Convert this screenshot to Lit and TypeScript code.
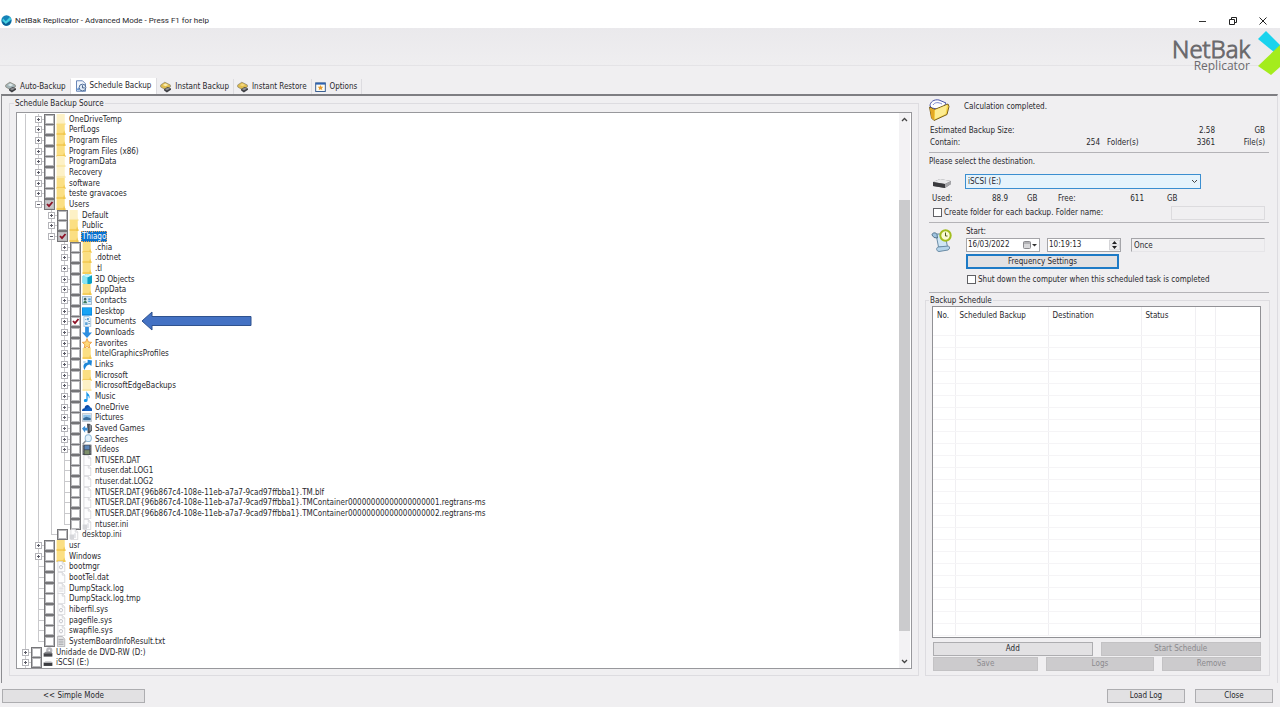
import { LitElement, html, css, svg, nothing } from "lit";
import { customElement, property, state } from "lit/decorators.js";
import { classMap } from "lit/directives/class-map.js";

type Check = "off" | "on" | "partial";

interface TreeEntry {
  name: string;
  level: number;
  icon: string;
  expand?: "plus" | "minus";
  check?: Check;
  last?: boolean;
  selected?: boolean;
  pointed?: boolean;
}

const dir = (level: number, name: string, icon = "folder", extra: Partial<TreeEntry> = {}): TreeEntry => ({
  name, level, icon, expand: "plus", ...extra,
});
const file = (level: number, name: string, icon = "file", extra: Partial<TreeEntry> = {}): TreeEntry => ({
  name, level, icon, ...extra,
});

const GUID = "NTUSER.DAT{96b867c4-108e-11eb-a7a7-9cad97ffbba1}";

const ENTRIES: TreeEntry[] = [
  dir(1, "OneDriveTemp", "folderPale"),
  dir(1, "PerfLogs"),
  dir(1, "Program Files"),
  dir(1, "Program Files (x86)"),
  dir(1, "ProgramData", "folderPale"),
  dir(1, "Recovery", "folderPale"),
  dir(1, "software"),
  dir(1, "teste gravacoes"),
  dir(1, "Users", "folder", { expand: "minus", check: "partial" }),
  dir(2, "Default", "folderPale"),
  dir(2, "Public"),
  dir(2, "Thiago", "folder", { expand: "minus", check: "partial", selected: true }),
  dir(3, ".chia"),
  dir(3, ".dotnet"),
  dir(3, ".tl"),
  dir(3, "3D Objects", "cube"),
  dir(3, "AppData"),
  dir(3, "Contacts", "contacts"),
  dir(3, "Desktop", "desktop"),
  dir(3, "Documents", "documents", { check: "on", pointed: true }),
  dir(3, "Downloads", "downloads"),
  dir(3, "Favorites", "star"),
  dir(3, "IntelGraphicsProfiles"),
  dir(3, "Links", "links"),
  dir(3, "Microsoft"),
  dir(3, "MicrosoftEdgeBackups", "folderPale"),
  dir(3, "Music", "music"),
  dir(3, "OneDrive", "cloud"),
  dir(3, "Pictures", "pictures"),
  dir(3, "Saved Games", "games"),
  dir(3, "Searches", "search"),
  dir(3, "Videos", "videos"),
  file(3, "NTUSER.DAT"),
  file(3, "ntuser.dat.LOG1"),
  file(3, "ntuser.dat.LOG2"),
  file(3, GUID + ".TM.blf"),
  file(3, GUID + ".TMContainer00000000000000000001.regtrans-ms"),
  file(3, GUID + ".TMContainer00000000000000000002.regtrans-ms"),
  file(3, "ntuser.ini", "fileIni", { last: true }),
  file(2, "desktop.ini", "fileIni", { last: true }),
  dir(1, "usr"),
  dir(1, "Windows"),
  file(1, "bootmgr", "fileSys"),
  file(1, "bootTel.dat"),
  file(1, "DumpStack.log", "fileLog"),
  file(1, "DumpStack.log.tmp"),
  file(1, "hiberfil.sys", "fileSys"),
  file(1, "pagefile.sys", "fileSys"),
  file(1, "swapfile.sys", "fileSys"),
  file(1, "SystemBoardInfoResult.txt", "fileTxt", { last: true }),
  dir(0, "Unidade de DVD-RW (D:)", "dvd"),
  dir(0, "iSCSI (E:)", "disk"),
];

const page = svg`<path d="M3 .5h7l4 4v11H3z" fill="#fdfdfe" stroke="#c9c9ce"/><path d="M10 .5v4h4" fill="none" stroke="#c9c9ce"/>`;

const TREE_ICONS: Record<string, unknown> = {
  folder: svg`<path d="M1 0h13v10l1 6H1z" fill="#fbdf83"/><path d="M1 13h14v3H1z" fill="#f5cd5b"/><path d="M13 9l2 7h-4z" fill="#f0c850"/>`,
  folderPale: svg`<path d="M1 0h13v10l1 6H1z" fill="#fdf1c6"/><path d="M1 13h14v3H1z" fill="#fae8a9"/>`,
  cube: svg`<path d="M1 3l6-3 9 2v11l-8 3-7-3z" fill="#1db5d6"/><path d="M1 3l8 2v11l-8-3z" fill="#8be4f2"/><path d="M1 3l6-3 9 2-7 3z" fill="#c2f3fa"/><path d="M9 5l7-3v11l-7 3z" fill="#0a9fc4"/>`,
  contacts: svg`<rect x=".5" y="2.500" width="15" height="11" fill="#d9ecf8" stroke="#7f9db5"/><circle cx="5" cy="6" r="2" fill="#48635a"/><path d="M2 12c0-5 6-5 6 0z" fill="#3d7a5c"/><path d="M10 6h4M10 9h4" stroke="#2f86d0" stroke-width="1.600"/>`,
  desktop: svg`<rect x="0" y="2" width="16" height="12" fill="#0a84dc"/><rect x="1" y="3" width="14" height="9" fill="#18a4f5"/>`,
  documents: svg`<path d="M3 .5h8l3 3v12H3z" fill="#e8f3fb" stroke="#8fb4cf"/><path d="M5 9h4v4H5zM8 3h3v3H8z" fill="#5ba3d8"/><path d="M10 8h3M10 11h3M5 5h2" stroke="#5f90b4" stroke-width="1.200"/>`,
  downloads: svg`<path d="M5 0h6v8h5l-8 8-8-8h5z" fill="#2f8fe0"/>`,
  star: svg`<path d="M8 .8l2.200 5 5.200.5-4 3.600 1.300 5.300L8 12.400l-4.700 2.800 1.300-5.300-4-3.600 5.200-.5z" fill="#ffd978" stroke="#e8963a" stroke-width="1.300"/>`,
  links: svg`<path d="M4 16c-4-7 0-11 5-11V1l7 1-1 8-3-2c-4 0-6 3-8 8z" fill="#1d86d8"/><path d="M2 3h4v3H2z" fill="#bcd9ee"/>`,
  music: svg`<path d="M7 0c1 4 6 4 5 10l-1 1c0-3-1-4-2-4v6c0 4-6 4-6 1 0-2 2-3 4-2z" fill="#1597ea"/>`,
  cloud: svg`<path d="M0 13c0-3 2-4 4-4 1-6 8-6 9-1 3 0 3 2 3 5z" fill="#0a4aa6"/><path d="M4 13c0-3 2-4 4-4 2-3 6-2 6 1 2 0 2 1 2 3z" fill="#1261c4"/>`,
  pictures: svg`<rect x=".5" y="2.500" width="15" height="11" fill="#eef3f7" stroke="#a9b3bd"/><rect x="2" y="4" width="12" height="8" fill="#8fc3ea"/><path d="M2 9l5-2 7 2v3H2z" fill="#3b6f9e"/>`,
  games: svg`<path d="M8 1h4l4 3v7l-4 4H9z" fill="#4b4f55"/><path d="M12 3h3v8h-3z" fill="#8e959c"/><path d="M0 8l5-4v3h4v4H5v3z" fill="#3a8fd6"/>`,
  search: svg`<circle cx="10" cy="6" r="5" fill="#e4f2fb" stroke="#8fb8d6" stroke-width="1.500"/><path d="M6 10l-5 5" stroke="#8d949b" stroke-width="2.200"/>`,
  videos: svg`<rect x="1" y="1" width="14" height="15" fill="#3b3f46"/><rect x="4" y="2" width="8" height="6" fill="#5b86b8"/><rect x="4" y="9" width="8" height="6" fill="#7d8f6a"/><path d="M2.500 2v13M13.500 2v13" stroke="#c9ccd0" stroke-dasharray="1.500 1.500"/>`,
  file: page,
  fileIni: svg`${page}<path d="M1 8h7v7H1z" fill="#d5d6da"/><path d="M8 6h3v7H8z" fill="#e3e4e8"/>`,
  fileSys: svg`${page}<circle cx="8" cy="9" r="2.500" fill="none" stroke="#bfc0c6" stroke-width="1.400"/>`,
  fileLog: svg`${page}<path d="M5 6h7M5 8h7M5 10h7M5 12h7" stroke="#d4d5d9"/>`,
  fileTxt: svg`<path d="M2.500 .5H10l4 4v11H2.500z" fill="#e6e6e8" stroke="#9b9ba0"/><path d="M4 5h8M4 7.500h8M4 10h8M4 12.500h8" stroke="#8d8e93"/>`,
  dvd: svg`<ellipse cx="10" cy="5" rx="5" ry="4.500" fill="#b9b9be"/><circle cx="10" cy="5" r="1.300" fill="#fff"/><path d="M1 9h14v5H1z" fill="#45464a"/><path d="M1 9l3-2h9l2 2z" fill="#8b8c90"/>`,
  disk: svg`<path d="M1 8h14v5H1z" fill="#3c3d41"/><path d="M1 8l3-2h9l2 2z" fill="#c4c5c9"/>`,
};

const stack = (accent: string, mark: string) => svg`
  <path d="M1 5l6-4 8 4v3l-7 4-7-4z" fill="${accent}" stroke="#6f6a5a" stroke-width=".8"/>
  <path d="M4 5l4-2 4 2-4 2z" fill="${mark}"/>
  <path d="M6 11l5-3 5 2v2l-6 4-4-3z" fill="#3d3e42"/>
  <path d="M7 11l4-2 4 1-5 3z" fill="#8d8e92"/>`;

const TAB_ICONS: Record<string, unknown> = {
  auto: stack("#a3b4b8", "#dfe9ea"),
  schedule: svg`<path d="M2 1h8l4 4v10H2z" fill="#f1f6fd" stroke="#5a7bb0" stroke-width="1.200"/><circle cx="10" cy="10" r="4.500" fill="#dfeaf6" stroke="#4e6d97" stroke-width="1.300"/><path d="M10 7v3.500h3" fill="none" stroke="#3a5580" stroke-width="1.200"/><path d="M1 13l4-3 1 4z" fill="#6d9bd4"/>`,
  backup: stack("#e0bd4e", "#fbeeb0"),
  restore: stack("#e0bd4e", "#f4d77c"),
  options: svg`<rect x="1" y="2" width="14" height="12.500" fill="#fffdf2" stroke="#33598f" stroke-width="1.400"/><path d="M1 2h14v2.500H1z" fill="#2f62b0"/><path d="M8 5l1.200 2.500 2.800.3-2 2 .6 2.700L8 11.200l-2.600 1.300.6-2.700-2-2 2.800-.3z" fill="#e79a2a"/>`,
};

const TABS = [
  { id: "auto", label: "Auto-Backup" },
  { id: "schedule", label: "Schedule Backup" },
  { id: "backup", label: "Instant Backup" },
  { id: "restore", label: "Instant Restore" },
  { id: "options", label: "Options" },
];

const shared = css`
  *, *::before, *::after { box-sizing: border-box; }
  svg { display: block; flex: none; }
  button, input, select {
    font: inherit; color: inherit; margin: 0; padding: 0;
    border-radius: 0; appearance: none; min-width: 0;
  }
  input[type="checkbox"] { flex: none; background: #fff; border: 1px solid #606064; width: 9px; height: 9px; }
  .push {
    height: 14px; border: 1px solid #adadb0; background: #e2e1e3; text-align: center; line-height: 12px;
  }
  .push:disabled { background: #cccbcd; border-color: #c3c2c4; color: #8b8a8d; }
  fieldset { margin: 0; min-width: 0; border: 1px solid #dddce0; display: flex; flex-direction: column; }
  legend { padding: 0 1px; line-height: 12px; height: 10px; }
`;

@customElement("folder-tree")
export class FolderTree extends LitElement {
  @property({ attribute: false }) entries: TreeEntry[] = [];

  static styles = [shared, css`
    :host { display: flex; min-height: 0; background: #fff; border: 1px solid #98989c; overflow: hidden; }
    ul { list-style: none; margin: 0; padding: 1px 0 0 1px; flex: 1; min-width: 0; display: flex; flex-direction: column; }
    li { flex: 1 1 0; min-height: 0; display: flex; align-items: center; }
    .rail {
      flex: none; width: 13px; align-self: stretch;
      background: linear-gradient(#c9c9cc, #c9c9cc) 7px 0 / 1px 100% no-repeat;
    }
    .node {
      display: flex; align-items: center; justify-content: center; padding-left: 1px;
      background:
        linear-gradient(#c9c9cc, #c9c9cc) 7px 0 / 1px 100% no-repeat,
        linear-gradient(#c9c9cc, #c9c9cc) 7px 50% / 6px 1px no-repeat;
    }
    .node.last {
      background:
        linear-gradient(#c9c9cc, #c9c9cc) 7px 0 / 1px 50% no-repeat,
        linear-gradient(#c9c9cc, #c9c9cc) 7px 50% / 6px 1px no-repeat;
    }
    .toggle { border: 0; background: #fff; width: 7px; height: 7px; }
    label { display: flex; align-items: center; height: 11px; white-space: nowrap; position: relative; }
    label input[type="checkbox"] {
      width: 11px; height: 11px; border-color: #757578; box-shadow: inset 0 0 0 1px #b9b9bc;
    }
    .box { display: grid; flex: none; }
    .box > * { grid-area: 1 / 1; }
    .box svg { pointer-events: none; z-index: 1; }
    .box .partial { background-color: #c6c6c9; }
    .icon { margin: 0 2px 0 1px; }
    .text { padding: 0 1px; line-height: 11px; }
    .text.selected { background: #0a72cf; color: #fff; outline: 1px dotted #e8a050; outline-offset: -1px; }
    .pointer { position: absolute; left: 100%; top: -5px; margin-left: 4px; pointer-events: none; z-index: 2; }
    .bar { flex: none; width: 11px; background: #f3f2f4; display: flex; flex-direction: column; margin-right: 1px; }
    .bar button { border: 0; background: none; height: 13px; display: grid; place-items: center; }
    .track { flex: 1; display: flex; flex-direction: column; }
    .before { flex: 74; }
    .thumb { flex: 433; background: #cbcbcd; }
    .after { flex: 24; }
  `];

  private row(e: TreeEntry) {
    const check = e.check ?? "off";
    return html`
      <li role="treeitem" aria-level=${e.level + 1} aria-selected=${e.selected ? "true" : "false"}>
        ${Array.from({ length: e.level }, () => html`<span class="rail"></span>`)}
        <span class=${classMap({ rail: true, node: true, last: !!e.last })}>
          ${e.expand
            ? html`<button class="toggle" aria-label=${(e.expand === "plus" ? "Expand " : "Collapse ") + e.name}>
                <svg width="7" height="7" viewBox="0 0 7 7">
                  <rect x=".5" y=".5" width="6" height="6" fill="#fff" stroke="#b4b4b9"/>
                  <path d=${e.expand === "plus" ? "M2 3.5h3M3.5 2v3" : "M2 3.5h3"} stroke="#5c5c68"/>
                </svg>
              </button>`
            : nothing}
        </span>
        <label>
          <span class="box">
            <input type="checkbox" class=${check} ?checked=${check !== "off"}>
            ${check !== "off"
              ? html`<svg width="11" height="11" viewBox="0 0 11 11"><path d="M3 5l2 2.200L8.500 3" fill="none" stroke="#8e1226" stroke-width="1.800"/></svg>`
              : nothing}
          </span>
          <svg class="icon" width="10" height="11" viewBox="0 0 16 16" preserveAspectRatio="none">${TREE_ICONS[e.icon]}</svg>
          <span class=${classMap({ text: true, selected: !!e.selected })}>${e.name}</span>
          ${e.pointed
            ? html`<svg class="pointer" width="111" height="20" viewBox="0 0 111 20" aria-hidden="true">
                <path d="M1 10L11 1v4.500h99v9H11V19z" fill="#4472c4" stroke="#2f528f"/>
              </svg>`
            : nothing}
        </label>
      </li>`;
  }

  render() {
    return html`
      <ul role="tree" aria-label="Schedule Backup Source">${this.entries.map((e) => this.row(e))}</ul>
      <div class="bar">
        <button aria-label="Scroll up"><svg width="7" height="5" viewBox="0 0 7 5"><path d="M1 4l2.500-2.500L6 4" fill="none" stroke="#444" stroke-width="1.300"/></svg></button>
        <div class="track"><span class="before"></span><span class="thumb"></span><span class="after"></span></div>
        <button aria-label="Scroll down"><svg width="7" height="5" viewBox="0 0 7 5"><path d="M1 1l2.500 2.500L6 1" fill="none" stroke="#444" stroke-width="1.300"/></svg></button>
      </div>`;
  }
}

@customElement("backup-settings")
export class BackupSettings extends LitElement {
  static styles = [shared, css`
    :host { display: flex; flex-direction: column; min-height: 0; line-height: 12px; }
    .band { display: grid; border-bottom: 1px solid #b4b3b7; margin: 0 1px 0 4px; }
    .status { grid-template-rows: 26px 13px 12px; padding: 0 4px 3px 1px; }
    .state { display: flex; align-items: center; gap: 14px; padding-bottom: 2px; margin-left: -2px; }
    .state span { margin-top: -6px; }
    .sizes { display: grid; grid-template-columns: 40px 130px 7px 1fr 40px 50px; align-items: center; }
    .wide { grid-column: 1 / 5; }
    .num { text-align: right; }
    .dest { grid-template-columns: 36px 1fr; padding-bottom: 3px; }
    .full { grid-column: 1 / -1; }
    .prompt { height: 21px; padding-top: 3px; }
    .drive { align-self: end; margin-left: 3px; }
    .combo { display: grid; width: 236px; }
    .combo > * { grid-area: 1 / 1; }
    .combo svg { justify-self: end; align-self: center; margin-right: 3px; pointer-events: none; }
    select { height: 15px; border: 1px solid #3b8ed0; background: #e5f3fc; padding: 0 2px; line-height: 12px; }
    .usage { display: grid; grid-template-columns: 30px 46px 19px 31px 36px 50px 23px auto; justify-content: start; height: 17px; align-items: center; padding: 2px 0 0 3px; }
    .naming { display: flex; align-items: center; justify-content: space-between; padding: 0 4px; height: 13px; }
    .tick { display: flex; align-items: center; gap: 2px; white-space: nowrap; }
    .naming input[type="text"] { width: 94px; height: 14px; border: 1px solid #dcdbde; background: #f0eff1; }
    .timing { grid-template-columns: 37px 1fr; padding: 2px 4px 5px 0; }
    .scroll { margin: 4px 0 0 2px; }
    .fields { display: grid; grid-template-columns: 74px 74px 1fr; column-gap: 7px; row-gap: 2px; align-items: center; }
    .start { grid-column: 1 / -1; height: 11px; line-height: 14px; }
    .field { display: flex; align-items: center; height: 14px; border: 1px solid #a5a5a9; background: #fff; }
    .field input { flex: 1; border: 0; background: none; padding-left: 1px; height: 12px; outline: 0; }
    .field button { border: 0; background: none; height: 12px; display: grid; place-items: center; }
    .once { height: 14px; margin-left: 3px; border: 1px solid #e6e5e8; border-top-color: #a5a5a9; border-left-color: #a5a5a9; background: #f0eff1; padding: 0 2px; }
    .freq { grid-column: 1 / 3; height: 15px; border: 2px solid #1d7ac6; line-height: 11px; margin-right: 2px; }
    .shut { grid-column: 1 / -1; padding-left: 1px; height: 15px; line-height: 15px; margin-top: 1px; }
    fieldset { flex: 1; padding: 1px 8px 4px 6px; margin: 2px 0 7px; min-height: 0; }
    legend { margin-left: -3px; }
    .sheet { flex: 1 1 0; min-height: 0; border: 1px solid #919195; background: #fff; overflow: hidden; }
    table { width: 100%; border-collapse: collapse; table-layout: fixed; }
    th { height: 28px; font-weight: normal; text-align: left; vertical-align: top; padding: 3px 0 0 4px; }
    td { height: 12px; padding: 0; }
    th, td { border-right: 1px solid #f0eff2; border-bottom: 1px solid #f5f4f6; }
    th:last-child, td:last-child { border-right: 0; }
    .buttons { display: flex; gap: 8px; margin-top: 4px; padding-left: 1px; }
    .buttons + .buttons { margin-top: 1px; }
    .c-no { width: 22px; } .c-wide { width: 93px; } .c-status { width: 54px; } .c-slim { width: 20px; }
    .g159 { flex: 159; } .g160 { flex: 160; }
    .g106 { flex: 106; } .g109 { flex: 109; } .g100 { flex: 100; }
  `];

  render() {
    return html`
      <div class="band status">
        <div class="state">
          <svg width="22" height="24" viewBox="0 0 22 24">
            <path d="M2 8c0-4 4-7 9-6l7 3-4 7-10-2z" fill="#fff" stroke="#4a55a8"/>
            <path d="M5 7c2-3 5-3 9-1" stroke="#7c8ad0" fill="none"/>
            <path d="M1.500 9l5 2.500L20 6l1 2.500-2 8L6 22.500 3.500 20z" fill="#f8d648" stroke="#7a6022"/>
            <path d="M7 12l12-5-1.500 9L7 21z" fill="#fdec92"/>
            <path d="M2 10l4.500 2-.5 10-2.500-2z" fill="#e3a723"/>
          </svg>
          <span>Calculation completed.</span>
        </div>
        <div class="sizes"><span class="wide">Estimated Backup Size:</span><span class="num">2.58</span><span class="num">GB</span></div>
        <div class="sizes"><span>Contain:</span><span class="num">254</span><span></span><span>Folder(s)</span><span class="num">3361</span><span class="num">File(s)</span></div>
      </div>

      <div class="band dest">
        <label class="full prompt" for="dest">Please select the destination.</label>
        <svg class="drive" width="20" height="12" viewBox="0 0 20 12">
          <path d="M1 5l7-3 11 2v3l-6 4L1 9z" fill="#6c6c70"/>
          <path d="M1 5l7-3 11 2-6 3z" fill="#e9e9eb"/>
          <path d="M1 5l12 2v4L1 9z" fill="#3a3a3e"/><path d="M13 7l6-3v3l-6 4z" fill="#a5a5a9"/>
        </svg>
        <div class="combo">
          <select id="dest"><option>iSCSI (E:)</option></select>
          <svg width="7" height="5" viewBox="0 0 7 5"><path d="M1 1l2.500 2.500L6 1" fill="none" stroke="#444"/></svg>
        </div>
        <div class="full usage">
          <span>Used:</span><span class="num">88.9</span><span></span><span>GB</span>
          <span>Free:</span><span class="num">611</span><span></span><span>GB</span>
        </div>
        <div class="full naming">
          <label class="tick"><input type="checkbox">Create folder for each backup. Folder name:</label>
          <input type="text" aria-label="Folder name" disabled>
        </div>
      </div>

      <div class="band timing">
        <svg class="scroll" width="22" height="24" viewBox="0 0 22 24">
          <path d="M5 5h9l2.500 13H7.500z" fill="#cfe6f5" stroke="#6a8ba5"/>
          <path d="M1 6c0-2.500 4-3 5-.5L6.500 9 3 8.500z" fill="#9fc3de" stroke="#55758f"/>
          <path d="M7 18c-2 1-2 4 1 4.500l9-1.500c2-1 2-3 .5-4z" fill="#b5d4ea" stroke="#6a8ba5"/>
          <circle cx="14.500" cy="6.500" r="5.200" fill="#fbfbd2" stroke="#a2bd1e" stroke-width="2"/>
          <path d="M14.500 3.500v3.500h2" fill="none" stroke="#4c5a20"/>
        </svg>
        <div class="fields">
          <label class="start" for="date">Start:</label>
          <div class="field">
            <input id="date" type="text" value="16/03/2022">
            <button aria-label="Open calendar"><svg width="17" height="10" viewBox="0 0 17 10"><rect x="1.500" y="1.500" width="7" height="7" rx="1" fill="#d8d8da" stroke="#8b8b8f"/><path d="M1 3h8" stroke="#8b8b8f"/><path d="M10 4h5l-2.500 2.500z" fill="#333"/></svg></button>
          </div>
          <div class="field">
            <input type="text" aria-label="Start time" value="10:19:13">
            <button aria-label="Adjust time"><svg width="11" height="12" viewBox="0 0 11 12"><path d="M.5 1h10v10H.5zM.5 6h10" fill="#f0f0f0" stroke="#d5d5d8"/><path d="M3 5h5L5.500 2zM3 7h5L5.500 10z" fill="#222"/></svg></button>
          </div>
          <input class="once" type="text" aria-label="Frequency" value="Once" readonly>
          <button class="push freq">Frequency Settings</button>
          <label class="tick shut"><input type="checkbox">Shut down the computer when this scheduled task is completed</label>
        </div>
      </div>

      <fieldset>
        <legend>Backup Schedule</legend>
        <div class="sheet">
          <table>
            <colgroup>
              <col class="c-no"><col class="c-wide"><col class="c-wide"><col class="c-status"><col class="c-slim"><col>
            </colgroup>
            <thead><tr><th>No.</th><th>Scheduled Backup</th><th>Destination</th><th>Status</th><th></th><th></th></tr></thead>
            <tbody>
              ${Array.from({ length: 25 }, () => html`<tr><td></td><td></td><td></td><td></td><td></td><td></td></tr>`)}
            </tbody>
          </table>
        </div>
        <div class="buttons"><button class="push g159">Add</button><button class="push g160" disabled>Start Schedule</button></div>
        <div class="buttons"><button class="push g106" disabled>Save</button><button class="push g109" disabled>Logs</button><button class="push g100" disabled>Remove</button></div>
      </fieldset>`;
  }
}

@customElement("app-root")
export class AppRoot extends LitElement {
  @state() private tab = "schedule";

  static styles = [shared, css`
    :host {
      display: flex; flex-direction: column; height: 100vh; padding: 12px 0 13px; box-sizing: border-box;
      background: #fff; color: #28282c; overflow: hidden;
      font: 8px/12px "DejaVu Sans Condensed", "DejaVu Sans", sans-serif;
    }
    .title { flex: none; height: 16px; display: flex; align-items: center; gap: 3px; padding: 1px 12px 0 1px; font-family: Roboto, sans-serif; }
    .title .name { flex: 1; }
    .title button { border: 0; background: none; width: 10px; height: 10px; margin-left: 17px; }
    .client { flex: 1; min-height: 0; display: flex; flex-direction: column; background: #f0eff1; }
    .banner { flex: none; height: 51px; display: flex; justify-content: flex-end; gap: 8px; background: linear-gradient(#eae9ec, #efeef0 37px, #e4e3e6 37px, #e4e3e6 38px, #f0eff1 38px); }
    .brand { display: grid; justify-items: end; align-content: start; padding-top: 9px; color: #6b6a6d; }
    .brand b { font: 300 24px/24px "Open Sans", sans-serif; -webkit-text-stroke: 1px #6b6a6d; }
    .brand span { font: 400 12px/12px "Open Sans", sans-serif; margin-top: -1px; }
    .mark { margin-top: 2px; }
    .tabs { flex: none; height: 15px; display: flex; align-items: flex-end; padding-left: 2px; }
    .tabs button { height: 15px; display: flex; align-items: center; gap: 4px; padding: 1px 4px 0 3px; border: 0; border-right: 1px solid #dddce0; background: none; }
    .tabs button.current { background: #fff; padding: 0 5px 0 4px; gap: 3px; height: 16px; }
    .panel {
      flex: 1; min-height: 0; margin: 0 2px 0 1px; display: grid;
      grid-template: minmax(0, 1fr) / minmax(0, 1fr) 345px; column-gap: 6px;
      border-top: 2px solid #7e7e82; border-left: 1px solid #8c8c90; border-right: 1px solid #dddce0; padding: 2px 7px 0;
    }
    .source { padding: 4px 6px 6px; margin-bottom: 7px; min-height: 0; }
    .source legend { margin-left: -2px; }
    folder-tree { flex: 1; }
    .foot { flex: none; display: flex; gap: 10px; padding: 6px 7px 4px 2px; }
    .simple { width: 143px; margin-right: auto; }
    .end { width: 78px; }
  `];

  render() {
    return html`
      <header class="title">
        <svg width="11" height="11" viewBox="0 0 16 16">
          <circle cx="8" cy="8" r="7.500" fill="#1583b8"/><path d="M1 9c3 3 10 3 14-1-1 5-4 7.500-7 7.500S2 13 1 9z" fill="#0c5f93"/>
          <path d="M3 5l4 4 6-6 2 3-8 7-5-5z" fill="#46cfe0"/>
        </svg>
        <span class="name">NetBak Replicator - Advanced Mode - Press F1 for help</span>
        <button aria-label="Minimize"><svg width="10" height="10" viewBox="0 0 10 10"><path d="M1 5.500h7" stroke="#333"/></svg></button>
        <button aria-label="Restore"><svg width="10" height="10" viewBox="0 0 10 10"><path d="M3.500 3V1.500h5v5H7M1.500 3.500h5v5h-5z" fill="none" stroke="#222"/></svg></button>
        <button aria-label="Close window"><svg width="10" height="10" viewBox="0 0 10 10"><path d="M1.500 1.500l7 7M8.500 1.500l-7 7" stroke="#222"/></svg></button>
      </header>
      <main class="client">
        <div class="banner">
          <div class="brand"><b>NetBak</b><span>Replicator</span></div>
          <svg class="mark" width="22" height="46" viewBox="0 0 22 46"><path d="M0 9l8-8 14 14v12z" fill="#19d3ee"/><path d="M0 36l22-21v22l-9 8z" fill="#a4ec1c"/></svg>
        </div>
        <nav class="tabs" role="tablist">
          ${TABS.map((t) => html`
            <button role="tab" aria-selected=${t.id === this.tab ? "true" : "false"} class=${classMap({ current: t.id === this.tab })} @click=${() => (this.tab = t.id)}>
              <svg width=${t.id === "schedule" ? 12 : 11} height="12" viewBox="0 0 16 16">${TAB_ICONS[t.id]}</svg>${t.label}
            </button>`)}
        </nav>
        <section class="panel">
          <fieldset class="source">
            <legend>Schedule Backup Source</legend>
            <folder-tree .entries=${ENTRIES}></folder-tree>
          </fieldset>
          <backup-settings></backup-settings>
        </section>
        <footer class="foot">
          <button class="push simple">&lt;&lt; Simple Mode</button>
          <button class="push end">Load Log</button>
          <button class="push end">Close</button>
        </footer>
      </main>`;
  }
}
